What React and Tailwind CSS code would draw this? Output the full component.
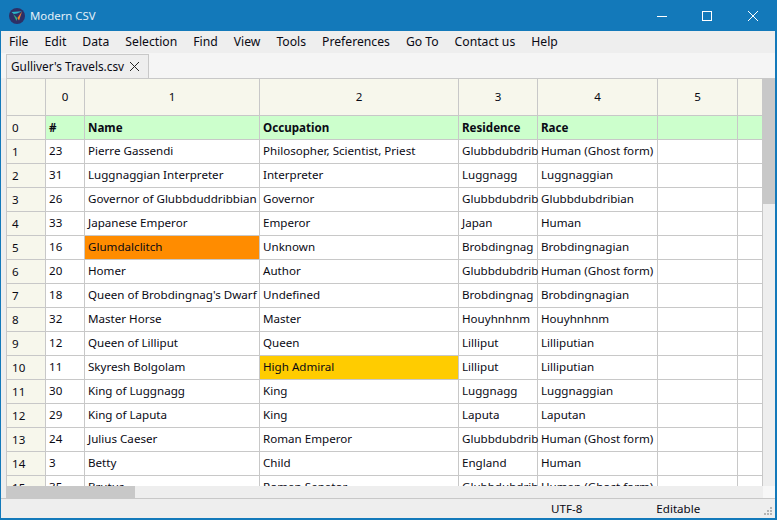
const MENU = ["File", "Edit", "Data", "Selection", "Find", "View", "Tools", "Preferences", "Go To", "Contact us", "Help"];

// widths include the 1px right border of each cell
const COLS = ["w-[39px]", "w-[175px]", "w-[199px]", "w-[79px]", "w-[120px]", "w-[80px]", "w-[25px]"];

const HEAD = ["#", "Name", "Occupation", "Residence", "Race", "", ""];

const ROWS = [
  ["23", "Pierre Gassendi", "Philosopher, Scientist, Priest", "Glubbdubdrib", "Human (Ghost form)"],
  ["31", "Luggnaggian Interpreter", "Interpreter", "Luggnagg", "Luggnaggian"],
  ["26", "Governor of Glubbduddribbian", "Governor", "Glubbdubdrib", "Glubbdubdribian"],
  ["33", "Japanese Emperor", "Emperor", "Japan", "Human"],
  ["16", "Glumdalclitch", "Unknown", "Brobdingnag", "Brobdingnagian"],
  ["20", "Homer", "Author", "Glubbdubdrib", "Human (Ghost form)"],
  ["18", "Queen of Brobdingnag's Dwarf", "Undefined", "Brobdingnag", "Brobdingnagian"],
  ["32", "Master Horse", "Master", "Houyhnhnm", "Houyhnhnm"],
  ["12", "Queen of Lilliput", "Queen", "Lilliput", "Lilliputian"],
  ["11", "Skyresh Bolgolam", "High Admiral", "Lilliput", "Lilliputian"],
  ["30", "King of Luggnagg", "King", "Luggnagg", "Luggnaggian"],
  ["29", "King of Laputa", "King", "Laputa", "Laputan"],
  ["24", "Julius Caeser", "Roman Emperor", "Glubbdubdrib", "Human (Ghost form)"],
  ["3", "Betty", "Child", "England", "Human"],
  ["35", "Brutus", "Roman Senator", "Glubbdubdrib", "Human (Ghost form)"],
];

function cellBg(r, c) {
  if (r === 4 && c === 1) return "bg-[#ff8c00]";
  if (r === 9 && c === 2) return "bg-[#ffcc00]";
  return "";
}

export default function App() {
  return (
    <div className="flex h-[520px] w-[777px] flex-col overflow-hidden border-r-2 border-b-2 border-l border-[#1379ba] bg-[#eeeeee] font-['Noto_Sans',sans-serif] text-[11.6px] text-[#0a0a14]">
      {/* title bar */}
      <div className="flex h-[31px] shrink-0 items-center bg-[#1379ba] text-white">
        <svg className="ml-[8px] h-[16px] w-[16px]" viewBox="0 0 16 16">
          <circle cx="8" cy="8" r="8" fill="#2d2f66" />
          <path d="M2.5 4 L13 3.2 L8 5.6 L4.8 6 Z" fill="#2ab5c9" />
          <path d="M13 3.5 L10 12.5 L8.4 10 Z" fill="#f0842c" />
          <path d="M4.2 6 L7.6 13 L8.2 10 Z" fill="#35b37e" />
        </svg>
        <span className="ml-[5px] text-[11.4px] text-[#e4f0f8]">Modern CSV</span>
        <div className="ml-auto flex items-center">
          <svg className="mr-[35px] h-[10px] w-[10px]" viewBox="0 0 10 10" fill="none" stroke="white">
            <path d="M0 5.5H10" />
          </svg>
          <svg className="mr-[36px] h-[10px] w-[10px]" viewBox="0 0 10 10" fill="none" stroke="white">
            <rect x="0.5" y="0.5" width="9" height="9" />
          </svg>
          <svg className="mr-[17px] h-[10px] w-[10px]" viewBox="0 0 10 10" fill="none" stroke="white">
            <path d="M0 0L10 10M10 0L0 10" />
          </svg>
        </div>
      </div>

      {/* menu bar */}
      <div className="flex h-[22px] shrink-0 items-center gap-[16px] pl-[8px] text-[12.2px]">
        {MENU.map((m) => (
          <span key={m}>{m}</span>
        ))}
      </div>

      {/* tab strip */}
      <div className="flex h-[25px] shrink-0 items-end bg-[#f5f5f5] pl-[5px]">
        <div className="flex h-[24px] w-[143px] items-center border border-b-0 border-[#c8c8c8] bg-[#eeeeee] pl-[4px] text-[11.8px]">
          <span className="w-[119px]">Gulliver's Travels.csv</span>
          <svg className="h-[9px] w-[9px]" viewBox="0 0 9 9" fill="none" stroke="#222">
            <path d="M0 0L9 9M9 0L0 9" />
          </svg>
        </div>
      </div>

      {/* grid + scrollbars */}
      <div className="flex min-h-0 flex-1 flex-col border-b border-[#c8c8c8] pl-[5px]">
        <div className="flex min-h-0 flex-1">
          <div className="min-w-0 flex-1 overflow-hidden border-t border-l border-[#c8c8c8] bg-white">
            <div className="flex h-[37px] border-b border-[#c8c8c8] bg-[#f7f7ec]">
              <div className={`${COLS[0]} shrink-0 border-r border-[#c8c8c8]`} />
              {HEAD.map((_, i) => (
                <div key={i} className={`${COLS[i]} flex shrink-0 items-center justify-center border-r border-[#c8c8c8]`}>
                  {i < 6 ? i : ""}
                </div>
              ))}
            </div>
            <div className="flex h-[24px] border-b border-[#c8c8c8] bg-[#ccffcc]">
              <div className="flex w-[39px] shrink-0 items-center border-r border-[#c8c8c8] bg-[#f7f7ec] pl-[5px]">0</div>
              {HEAD.map((h, i) => (
                <div key={i} className={`${COLS[i]} flex shrink-0 items-center border-r border-[#c8c8c8] pl-[3px] font-bold`}>
                  {h}
                </div>
              ))}
            </div>
            {ROWS.map((row, r) => (
              <div key={r} className="flex h-[24px] border-b border-[#c8c8c8]">
                <div className="flex w-[39px] shrink-0 items-center border-r border-[#c8c8c8] bg-[#f7f7ec] pl-[5px]">{r + 1}</div>
                {HEAD.map((_, c) => (
                  <div key={c} className={`${COLS[c]} ${cellBg(r, c)} flex shrink-0 items-center border-r border-[#c8c8c8] pb-[1px] pl-[3px] whitespace-nowrap`}>
                    {row[c]}
                  </div>
                ))}
              </div>
            ))}
          </div>
          <div className="w-[12px] shrink-0">
            <div className="h-[126px] bg-[#c8c8c8]" />
          </div>
        </div>
        <div className="flex h-[12px] shrink-0 justify-between">
          <div className="h-full w-[129px] bg-[#c8c8c8]" />
          <div className="h-full w-[12px] bg-[#f7f7f7]" />
        </div>
      </div>

      {/* status bar */}
      <div className="relative flex h-[19px] shrink-0 items-center pl-[550px]">
        <span>UTF-8</span>
        <span className="ml-[74px]">Editable</span>
        <svg className="absolute right-[2px] bottom-[2px] h-[9px] w-[9px]" viewBox="0 0 9 9" fill="#b4b4b4">
          <rect x="6" y="0" width="2" height="2" />
          <rect x="3" y="3" width="2" height="2" />
          <rect x="6" y="3" width="2" height="2" />
          <rect x="0" y="6" width="2" height="2" />
          <rect x="3" y="6" width="2" height="2" />
          <rect x="6" y="6" width="2" height="2" />
        </svg>
      </div>
    </div>
  );
}
